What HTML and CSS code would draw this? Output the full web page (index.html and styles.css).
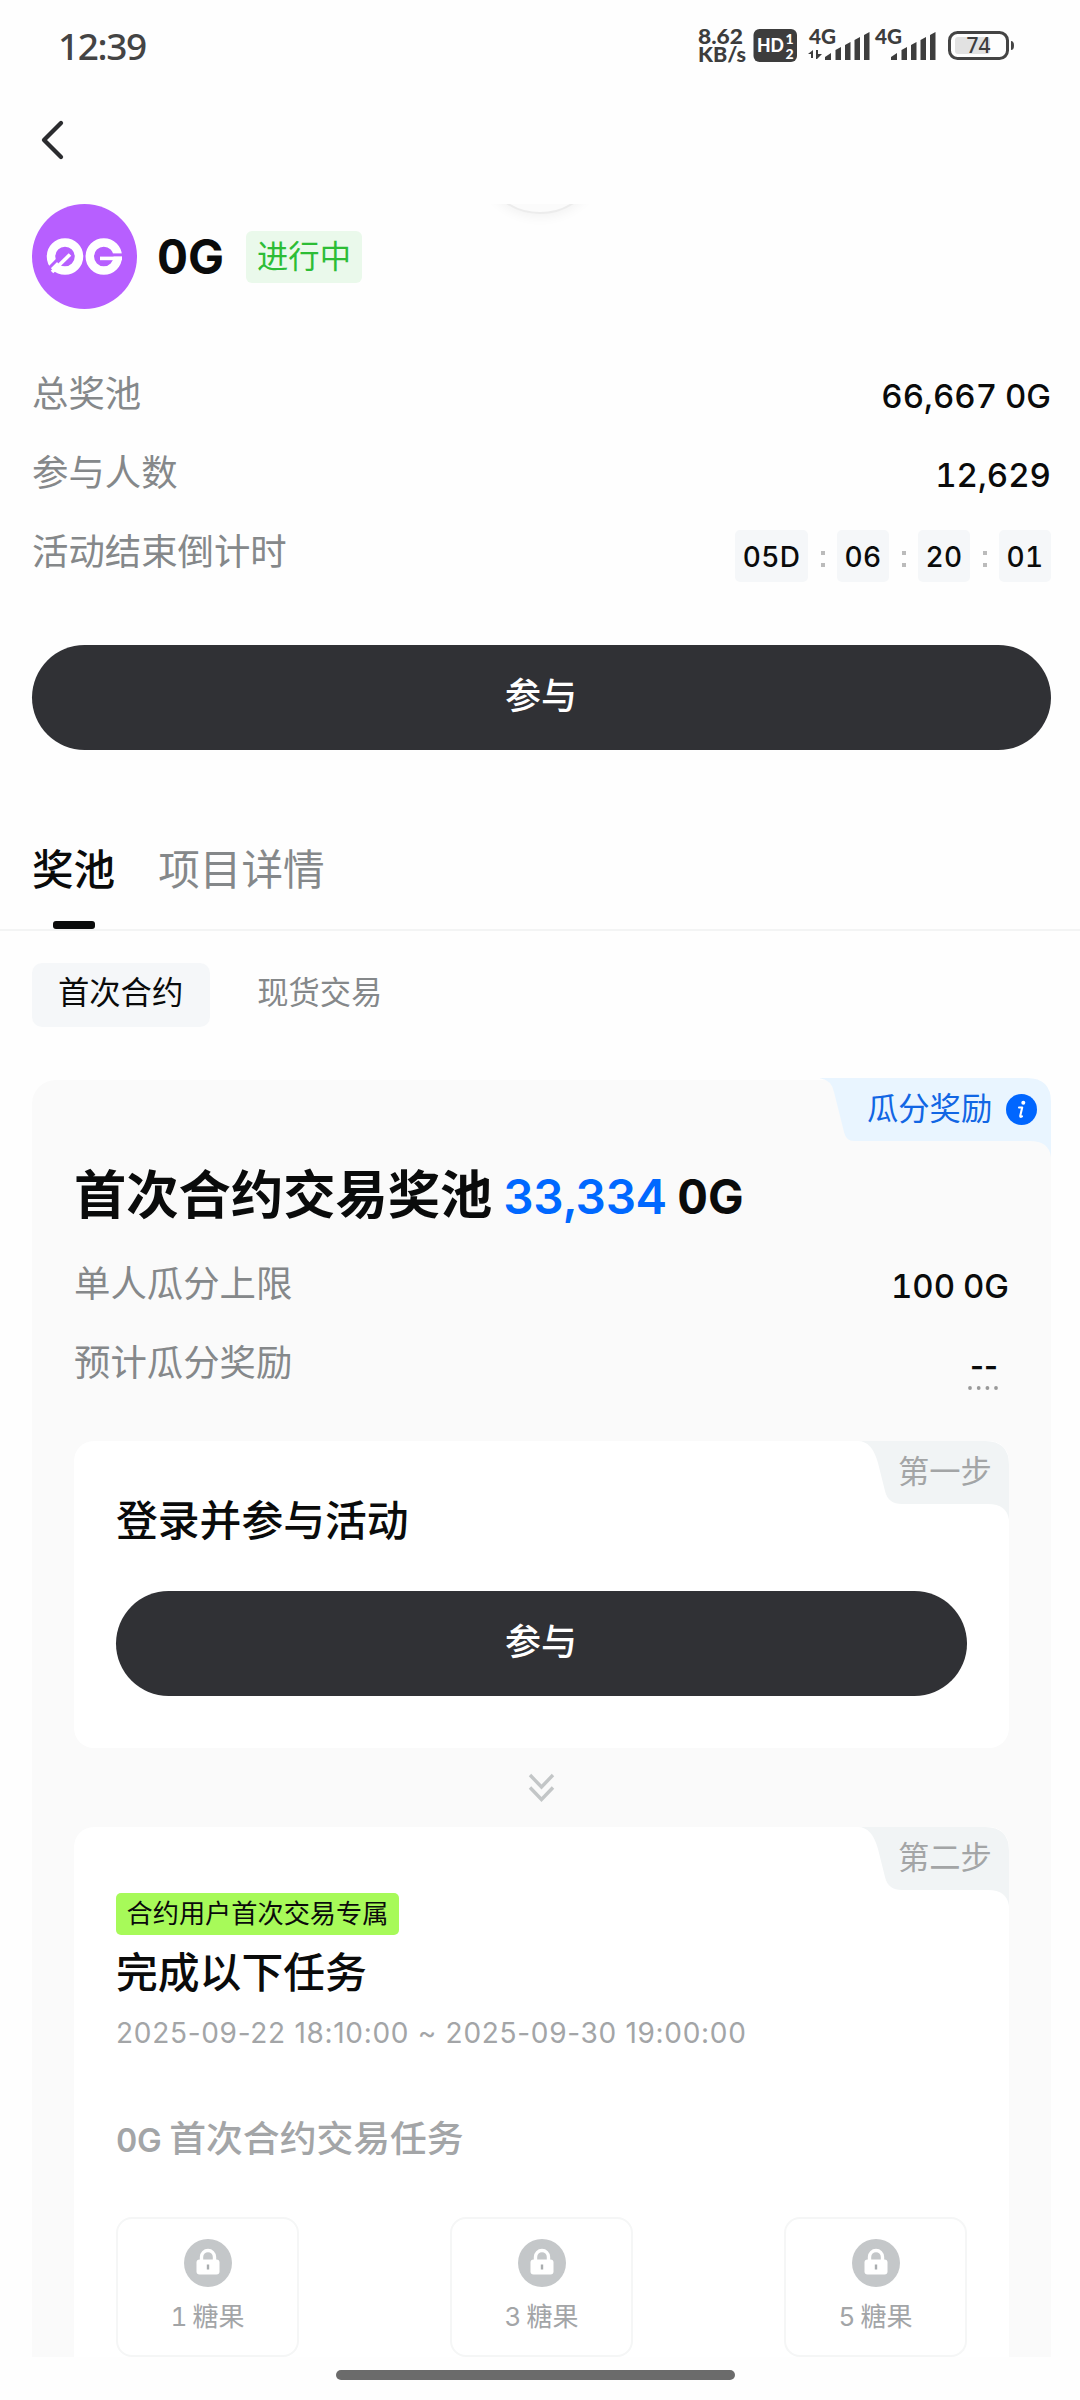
FILE: index.html
```html
<!DOCTYPE html>
<html lang="zh-CN">
<head>
<meta charset="utf-8">
<title>0G</title>
<link rel="stylesheet" href="styles.css">
</head>
<body>
<div class="screen">
  <div class="status">
    <span class="clock">12:39</span>
    <svg class="status-icons" width="320" height="50" viewBox="698 20 320 50">
      <g fill="#3d3d3d" font-family="Lato, sans-serif" font-weight="900">
        <text x="698" y="43.500" font-size="20" textLength="45" lengthAdjust="spacingAndGlyphs">8.62</text>
        <text x="698" y="62" font-size="20" textLength="48" lengthAdjust="spacingAndGlyphs">KB/s</text>
        <rect x="753.5" y="29" width="43.5" height="33" rx="6"/>
        <text x="757" y="52" font-size="19" fill="#fff" textLength="27" lengthAdjust="spacingAndGlyphs">HD</text>
        <text x="785.5" y="43.500" font-size="14" fill="#fff">1</text>
        <text x="785.5" y="58.500" font-size="14" fill="#fff">2</text>
        <text x="809" y="44" font-size="21" textLength="27" lengthAdjust="spacingAndGlyphs">4G</text>
        <text x="875" y="44" font-size="21" textLength="27" lengthAdjust="spacingAndGlyphs">4G</text>
        <path d="M808 54l5-4v8h-2v-4zM816 50h2v4h4l-5 5h-1z"/>
        <path id="bars" d="M825 60v-3l6-4v7zM835.500 60v-10l5.500-3v13zM845 60v-15l5.500-3v18zM854.500 60v-20l5.500-3v23zM864 60v-25l5.500-3v28z"/>
        <use href="#bars" x="66"/>
      </g>
      <rect x="949.500" y="32.500" width="58" height="26" rx="8" fill="none" stroke="#444" stroke-width="3"/>
      <rect x="955" y="37" width="35" height="17" rx="3" fill="#e2e2e2"/>
      <path d="M1011 41q3 0 3 4.500t-3 4.500z" fill="#444"/>
      <text x="966.500" y="53" font-family="Noto Sans, sans-serif" font-size="21" font-weight="500" fill="#3d3d3d" textLength="24">74</text>
    </svg>
  </div>
  <div class="nav">
    <svg width="28" height="44" viewBox="0 0 28 44"><path d="M23 5 6 22l17 17" fill="none" stroke="#2b2c2f" stroke-width="4.300" stroke-linecap="round" stroke-linejoin="round"/></svg>
  </div>

  <main class="content">
    <i class="puller"></i>
    <div class="project">
      <svg class="logo" width="105" height="105" viewBox="0 0 105 105">
        <circle cx="52.500" cy="52.500" r="52.500" fill="#b75fff"/>
        <g fill="none">
          <circle cx="33" cy="52.500" r="14" stroke="#fff" stroke-width="8.500"/>
          <path d="M17 64 33 48" stroke="#b75fff" stroke-width="3"/>
          <path d="M20 68 38 50.500" stroke="#fff" stroke-width="3.600"/>
          <circle cx="71.800" cy="52.500" r="14" stroke="#fff" stroke-width="8.500"/>
          <path d="M71 51h20" stroke="#b75fff" stroke-width="3.200"/>
          <path d="M68 54.400h22" stroke="#fff" stroke-width="3.600"/>
        </g>
      </svg>
      <h1>0G</h1>
      <span class="state">进行中</span>
    </div>
    <dl class="facts">
      <div><dt>总奖池</dt><dd>66,667 0G</dd></div>
      <div><dt>参与人数</dt><dd>12,629</dd></div>
      <div><dt>活动结束倒计时</dt>
        <dd class="countdown"><b class="days">05D</b><i></i><b>06</b><i></i><b>20</b><i></i><b>01</b></dd></div>
    </dl>
    <button class="join">参与</button>
    <div class="tabs"><span class="on">奖池</span><span>项目详情</span></div>
    <div class="subtabs"><span class="on">首次合约</span><span>现货交易</span></div>

    <section class="pool">
      <div class="pool-tag">
        <svg width="231" height="80" viewBox="0 0 231 80"><path d="M-4 0H207Q231 0 231 24V79Q229 63 210 63H34Q26 63 24 54L14 14Q11 0-4 0Z" fill="#e9f5ff"/></svg>
        <span>瓜分奖励</span>
        <svg class="info" width="31" height="31" viewBox="0 0 31 31"><circle cx="15.500" cy="15.500" r="15.500" fill="#0066ff"/><circle cx="17.300" cy="8.700" r="2" fill="#fff"/><path d="M13 13.500h3.200l-2 8.500q-.2 1.500 1.800.3" fill="none" stroke="#fff" stroke-width="2.100" stroke-linecap="round" stroke-linejoin="round"/></svg>
      </div>
      <h2>首次合约交易奖池<em>33,334</em><b>0G</b></h2>
      <dl class="limits">
        <div><dt>单人瓜分上限</dt><dd>100 0G</dd></div>
        <div><dt>预计瓜分奖励</dt><dd class="none"><span>--</span><svg width="31" height="4" viewBox="0 0 31 4"><g fill="#999"><circle cx="2" cy="2" r="1.900"/><circle cx="10.700" cy="2" r="1.900"/><circle cx="19.400" cy="2" r="1.900"/><circle cx="28" cy="2" r="1.900"/></g></svg></dd></div>
      </dl>

      <article class="step first">
        <div class="step-tag"><svg width="151" height="80" viewBox="0 0 151 80"><path d="M0 0H127Q151 0 151 24V79Q149 63 130 63H44Q30 63 27 50L20 22Q14 0 0 0Z" fill="#f1f4f5"/></svg><span>第一步</span></div>
        <h3>登录并参与活动</h3>
        <button class="join">参与</button>
      </article>
      <svg class="down" width="27" height="30" viewBox="0 0 27 30"><path d="M2 2l11.500 12L25 2M2 14.500l11.500 12 11.500-12" fill="none" stroke="#c3c6c7" stroke-width="3.400"/></svg>
      <article class="step second">
        <div class="step-tag"><svg width="151" height="80" viewBox="0 0 151 80"><path d="M0 0H127Q151 0 151 24V79Q149 63 130 63H44Q30 63 27 50L20 22Q14 0 0 0Z" fill="#f1f4f5"/></svg><span>第二步</span></div>
        <span class="exclusive">合约用户首次交易专属</span>
        <h3>完成以下任务</h3>
        <p class="period">2025-09-22 18:10:00 ~ 2025-09-30 19:00:00</p>
        <p class="task"><b>0G</b>首次合约交易任务</p>
        <div class="candies">
          <div class="candy"><svg width="48" height="48" viewBox="0 0 48 48"><circle cx="24" cy="24" r="24" fill="#c4c7c9"/><path d="M17.500 22v-4a6.500 6.500 0 0 1 13 0v4" fill="none" stroke="#fff" stroke-width="3.400"/><rect x="12.500" y="20.500" width="23" height="15" rx="3" fill="#fff"/><path d="M24 25.500v5" stroke="#a9adaf" stroke-width="2.400"/></svg><span>1 糖果</span></div>
          <div class="candy"><svg width="48" height="48" viewBox="0 0 48 48"><circle cx="24" cy="24" r="24" fill="#c4c7c9"/><path d="M17.500 22v-4a6.500 6.500 0 0 1 13 0v4" fill="none" stroke="#fff" stroke-width="3.400"/><rect x="12.500" y="20.500" width="23" height="15" rx="3" fill="#fff"/><path d="M24 25.500v5" stroke="#a9adaf" stroke-width="2.400"/></svg><span>3 糖果</span></div>
          <div class="candy"><svg width="48" height="48" viewBox="0 0 48 48"><circle cx="24" cy="24" r="24" fill="#c4c7c9"/><path d="M17.500 22v-4a6.500 6.500 0 0 1 13 0v4" fill="none" stroke="#fff" stroke-width="3.400"/><rect x="12.500" y="20.500" width="23" height="15" rx="3" fill="#fff"/><path d="M24 25.500v5" stroke="#a9adaf" stroke-width="2.400"/></svg><span>5 糖果</span></div>
        </div>
      </article>
    </section>
  </main>
  <div class="home"><i></i></div>
</div>
</body>
</html>
```
FILE: styles.css
```css
* { box-sizing: border-box; margin: 0; padding: 0; }
body { background: #fefefe; }
.screen {
  width: 1080px; height: 2400px; overflow: hidden;
  display: flex; flex-direction: column;
  font-family: Inter, "Noto Sans CJK SC", sans-serif;
  font-variant-numeric: tabular-nums;
  color: #0a0b0b;
}
svg { display: block; flex: none; }
i, em { font-style: normal; }

/* system bar and navigation */
.status { height: 90px; padding: 20px 62px 20px 58px; display: flex; justify-content: space-between; }
.clock { font: 500 37px/51px "Noto Sans", sans-serif; color: #444; letter-spacing: -1.4px; }
.nav { height: 114px; padding: 28px 0 0 38px; }

.content { position: relative; height: 2153px; overflow: hidden; flex: none; }
.puller {
  position: absolute; left: 479px; top: -112px; width: 122px; height: 122px;
  border-radius: 50%; border: 2px solid #ececec; background: #fbfbfb;
  box-shadow: 0 3px 12px rgba(0, 0, 0, .05);
}

/* project summary */
.project { height: 105px; margin-left: 32px; display: flex; align-items: center; }
.project h1 { margin-left: 20px; font-size: 48px; line-height: 60px; font-weight: 700; width: 89px; }
.state {
  width: 116px; height: 52px; border-radius: 6px; background: #eaf9eb; color: #2dbd36;
  font-size: 31.300px; line-height: 52px; text-align: center;
}
dl > div { display: flex; justify-content: space-between; height: 79px; }
dt { color: #85888a; font-size: 36.400px; line-height: 81px; font-weight: 400; white-space: nowrap; }
dd { font-size: 33px; line-height: 84px; font-weight: 500; word-spacing: -1px; }
.facts { margin: 45px 29px 0 32px; height: 291px; }
.countdown { display: flex; align-items: center; height: 83px; padding-top: 4px; }
.countdown b { width: 52px; height: 52px; border-radius: 5px; background: #f5f7f9; font-size: 28px; line-height: 54px; font-weight: 500; text-align: center; letter-spacing: .4px; }
.countdown .days { width: 73px; }
.countdown i { width: 29px; height: 16px; margin-top: 7px; background: linear-gradient(#bbb 4px, transparent 4px 12px, #bbb 12px) center / 4px 16px no-repeat; }
.join {
  display: block; width: 1019px; height: 105px; margin: 0 0 0 32px; padding: 0 1px 2px 0; border: 0; border-radius: 53px;
  background: #303135; color: #fff; font: 500 36px/101px Inter, "Noto Sans CJK SC", sans-serif; text-align: center;
}

/* tabs */
.tabs { height: 181px; padding: 83px 32px 0; display: flex; gap: 43px; border-bottom: 2px solid #f3f4f4; font-size: 41.600px; line-height: 74px; color: #85888a; }
.tabs .on { position: relative; color: #0a0b0b; font-weight: 500; }
.tabs .on::after { content: ""; position: absolute; left: 21px; bottom: 0; width: 42px; height: 8px; border-radius: 3px; background: #0a0b0b; }
.subtabs { height: 64px; margin: 32px 32px 0; display: flex; gap: 21px; font-size: 31.300px; line-height: 61px; color: #85888a; }
.subtabs span { padding: 0 27px 0 26px; border-radius: 10px; }
.subtabs .on { background: #f5f7f9; color: #0a0b0b; }

/* prize pool card */
.pool { position: relative; margin: 53px 29px 0 32px; height: 1400px; border-radius: 24px 24px 0 0; background: #fafafa; padding: 1px 42px 0; }
.pool-tag, .step-tag { position: absolute; right: 0; top: 0; color: #a3a5a6; font-size: 31.300px; line-height: 62px; }
.pool-tag { top: -2px; color: #1166e4; }
.pool-tag span { position: absolute; left: 47px; top: 0; white-space: nowrap; }
.pool-tag .info { position: absolute; left: 186px; top: 16px; }
.pool h2 { margin-top: 76px; height: 76px; font-size: 52.300px; line-height: 76px; font-weight: 700; white-space: nowrap; display: flex; align-items: baseline; }
.pool h2 em { color: #0068ff; font-weight: 600; font-size: 47.500px; letter-spacing: -.6px; margin: 0 11px; }
.pool h2 b { font-size: 47.500px; font-weight: 700; }
.limits { margin-top: 11px; height: 197px; }
.limits .none { display: flex; flex-direction: column; align-items: flex-end; padding-right: 11px; font-variant-numeric: normal; }
.none span { line-height: 60px; margin-top: 13px; font-weight: 600; font-size: 30px; }
.none svg { margin-top: -10px; margin-right: -1px; }

/* steps */
.step { position: relative; width: 935px; border-radius: 20px; background: #fff; padding: 0 42px; }
.step-tag span { position: absolute; left: 40px; top: 0; white-space: nowrap; }
.step h3 { font-size: 41.800px; line-height: 60px; font-weight: 500; white-space: nowrap; }
.first { height: 307px; padding-top: 50px; }
.first .join { width: 851px; margin: 40px 0 0; }
.down { margin: 25px 0 24px 454px; }
.second { height: 700px; padding-top: 66px; }
.exclusive { display: block; width: 283px; height: 42px; border-radius: 5px; background: #a7fa59; font-size: 26.200px; line-height: 42px; text-align: center; white-space: nowrap; }
.second h3 { margin-top: 8px; }
.period { margin-top: 10px; font-size: 28px; line-height: 40px; letter-spacing: .7px; color: #a3a5a7; white-space: nowrap; font-variant-numeric: normal; }
.task { margin-top: 56px; height: 61px; font-size: 36.800px; line-height: 60px; font-weight: 500; color: #a3a5a7; display: flex; align-items: baseline; }
.task b { font-size: 33px; font-weight: 600; letter-spacing: -.4px; margin-right: 8px; }
.candies { display: flex; justify-content: space-between; margin-top: 47px; width: 851px; }
.candy { position: relative; width: 183px; height: 140px; border: 2px solid #f5f6f6; border-radius: 16px; display: flex; flex-direction: column; align-items: center; padding-top: 20px; color: #a3a5a7; font-size: 26px; line-height: 40px; word-spacing: -2px; }
.candy span { margin-top: 10px; }
.candy::after { content: ""; position: absolute; left: 79px; bottom: -5px; width: 21px; height: 4px; background: #f5f6f6; }
.home { flex: 1; padding: 13px 0 0 336px; }
.home i { display: block; width: 399px; height: 10px; border-radius: 5px; background: #6b6b6b; }
```
